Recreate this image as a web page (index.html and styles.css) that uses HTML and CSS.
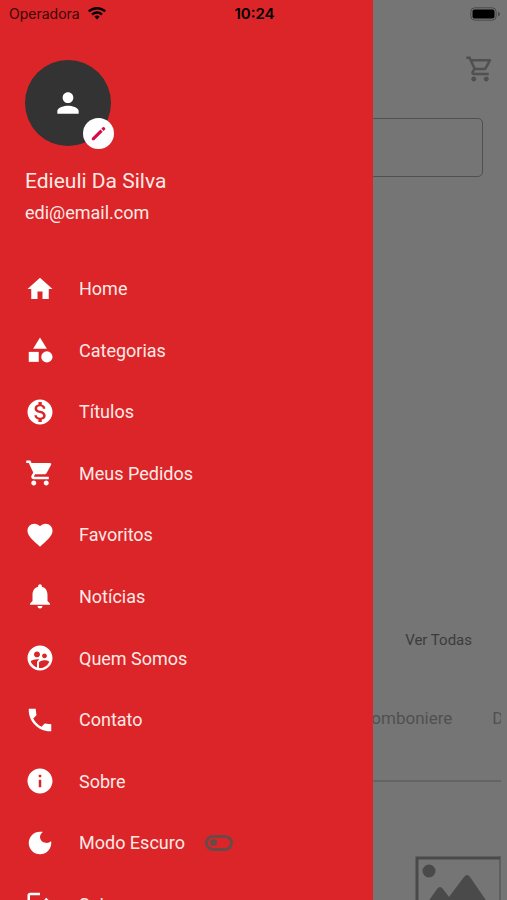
FILE: index.html
```html
<!DOCTYPE html>
<html lang="pt-BR">
<head>
<meta charset="utf-8">
<meta name="viewport" content="width=device-width, initial-scale=1">
<title>Menu</title>
<link rel="stylesheet" href="styles.css">
</head>
<body>
<div class="app">
  <main class="page">
    <div class="toolbar">
      <button class="cart" type="button" aria-label="Carrinho">
        <svg class="icon" viewBox="0 0 24 24"><path d="M15.55 13c.75 0 1.41-.41 1.75-1.03l3.58-6.49A.996.996 0 0 0 20.01 4H5.21l-.94-2H1v2h2l3.6 7.59-1.35 2.44C4.52 15.37 5.48 17 7 17h12v-2H7l1.1-2h7.45zM6.16 6h12.15l-2.76 5H8.53L6.16 6zM7 18c-1.1 0-1.99.9-1.99 2S5.900 22 7 22s2-.9 2-2-.9-2-2-2zm10 0c-1.1 0-1.99.9-1.99 2s.89 2 1.990 2 2-.9 2-2-.9-2-2-2z"/></svg>
      </button>
    </div>
    <input class="search" type="text" aria-label="Buscar">
    <section class="products">
      <a class="see-all" href="#">Ver Todas</a>
      <div class="tabs"><a href="#">Bomboniere</a><a href="#">Doces</a></div>
      <div class="cards">
        <svg class="placeholder" viewBox="0 0 86 74"><path class="frame" d="M2 74V2h83"/><path class="edge" d="M85 0v74"/><circle cx="14" cy="15" r="6.500"/><path d="M8 53 22 33q3-4 6 0l6 8 15-20q3-4 6 0l22 32v21H8z"/></svg>
      </div>
    </section>
  </main>

  <aside class="drawer">
    <div class="profile">
      <div class="avatar">
        <svg class="person" viewBox="0 0 24 24"><path d="M12 12c2.210 0 4-1.790 4-4s-1.790-4-4-4-4 1.790-4 4 1.790 4 4 4zm0 2c-2.670 0-8 1.340-8 4v2h16v-2c0-2.660-5.330-4-8-4z"/></svg>
        <button class="edit" type="button" aria-label="Editar foto">
          <svg viewBox="0 0 24 24"><path d="M4 17.500 14.500 7l2.800 2.800L6.800 20.300Q6.500 20.600 6 20.600H4.500q-1 0-1-1v-1.300q0-.5.5-.8zM15.600 5.900l1.700-1.700q1-1 2 0l.9.9q1 1 0 2l-1.700 1.700z"/></svg>
        </button>
      </div>
      <h1 class="name">Edieuli Da Silva</h1>
      <p class="email">edi@email.com</p>
    </div>
    <nav>
      <ul class="menu">
        <li><a href="#"><svg class="icon" viewBox="0 0 24 24"><path d="M10 20v-6h4v6h5v-8h3L12 3 2 12h3v8z"/></svg>Home</a></li>
        <li><a href="#"><svg class="icon" viewBox="0 0 24 24"><path d="M12 2 6.500 11h11z"/><circle cx="17.500" cy="17.500" r="4.500"/><path d="M3 13.500h8v8H3z"/></svg>Categorias</a></li>
        <li><a href="#"><svg class="icon" viewBox="0 0 24 24"><path d="M12 2C6.480 2 2 6.480 2 12s4.480 10 10 10 10-4.480 10-10S17.520 2 12 2zm1.410 16.090V20h-2.670v-1.930c-1.710-.36-3.160-1.460-3.270-3.400h1.960c.1 1.050.82 1.870 2.650 1.870 1.960 0 2.400-.98 2.400-1.590 0-.83-.44-1.610-2.670-2.140-2.480-.6-4.180-1.620-4.180-3.670 0-1.720 1.390-2.840 3.110-3.210V4h2.670v1.950c1.860.45 2.790 1.860 2.850 3.390H14.300c-.05-1.110-.64-1.870-2.220-1.870-1.500 0-2.400.68-2.400 1.640 0 .84.65 1.390 2.670 1.910s4.180 1.390 4.180 3.910c-.01 1.830-1.380 2.830-3.120 3.160z"/></svg>Títulos</a></li>
        <li><a href="#"><svg class="icon" viewBox="0 0 24 24"><path d="M7 18c-1.100 0-1.990.9-1.990 2S5.900 22 7 22s2-.9 2-2-.9-2-2-2zM1 2v2h2l3.600 7.590-1.350 2.450c-.16.28-.25.61-.25.960 0 1.100.9 2 2 2h12v-2H7.420c-.14 0-.25-.11-.25-.25l.03-.12.900-1.630h7.450c.75 0 1.410-.41 1.750-1.030l3.580-6.490A1 1 0 0 0 20 4H5.210l-.94-2H1zm16 16c-1.100 0-1.990.9-1.990 2s.89 2 1.990 2 2-.9 2-2-.9-2-2-2z"/></svg>Meus Pedidos</a></li>
        <li><a href="#"><svg class="icon" viewBox="0 0 24 24"><path d="m12 21.350-1.450-1.320C5.400 15.360 2 12.280 2 8.500 2 5.420 4.420 3 7.500 3c1.740 0 3.410.81 4.500 2.090C13.090 3.810 14.760 3 16.500 3 19.580 3 22 5.420 22 8.500c0 3.780-3.400 6.860-8.550 11.540L12 21.350z"/></svg>Favoritos</a></li>
        <li><a href="#"><svg class="icon" viewBox="0 0 24 24"><path d="M12 22c1.100 0 2-.9 2-2h-4c0 1.100.89 2 2 2zm6-6v-5c0-3.070-1.640-5.640-4.500-6.320V4c0-.83-.67-1.500-1.500-1.500s-1.500.67-1.500 1.500v.68C7.630 5.360 6 7.920 6 11v5l-2 2v1h16v-1l-2-2z"/></svg>Notícias</a></li>
        <li><a href="#"><svg class="icon" viewBox="0 0 24 24"><path d="M11.990 2c-5.520 0-10 4.480-10 10s4.480 10 10 10 10-4.480 10-10-4.480-10-10-10zm3.610 6.340c1.070 0 1.930.86 1.930 1.930s-.86 1.930-1.930 1.930-1.930-.86-1.930-1.930c-.01-1.070.86-1.930 1.930-1.930zm-6-1.580c1.300 0 2.360 1.060 2.360 2.360s-1.060 2.360-2.360 2.360-2.360-1.060-2.360-2.360c0-1.310 1.050-2.360 2.360-2.360zm0 9.130v3.750c-2.400-.75-4.300-2.600-5.140-4.960 1.050-1.120 3.670-1.690 5.140-1.690.53 0 1.200.08 1.900.22-1.640.87-1.900 2.020-1.900 2.680zM11.990 20c-.27 0-.53-.01-.79-.04v-4.070c0-1.420 2.940-2.130 4.400-2.130 1.070 0 2.920.39 3.840 1.150C18.270 17.880 15.380 20 11.990 20z"/></svg>Quem Somos</a></li>
        <li><a href="#"><svg class="icon" viewBox="0 0 24 24"><path d="m21 15.460-5.270-.61-2.520 2.520a15.050 15.050 0 0 1-6.590-6.590l2.530-2.530L8.540 3H3.030C2.450 13.180 10.820 21.550 21 20.970v-5.510z"/></svg>Contato</a></li>
        <li><a href="#"><svg class="icon" viewBox="0 0 24 24"><path d="M12 2C6.480 2 2 6.480 2 12s4.480 10 10 10 10-4.480 10-10S17.520 2 12 2zm1 15h-2v-6h2v6zm0-8h-2V7h2v2z"/></svg>Sobre</a></li>
        <li><label for="dark-mode"><svg class="icon" viewBox="0 0 24 24"><path d="M12 3a9 9 0 1 0 9 9c0-.46-.04-.92-.1-1.360A5.390 5.390 0 0 1 12 7.500c0-1.810.89-3.420 2.260-4.400C13.820 3.040 13.460 3 12 3z"/></svg>Modo Escuro</label><input class="switch" id="dark-mode" type="checkbox" role="switch"></li>
        <li><a href="#"><svg class="icon" viewBox="0 0 24 24"><path d="m17 7-1.410 1.410L18.170 11H8v2h10.170l-2.580 2.580L17 17l5-5zM4 5h8V3H4c-1.100 0-2 .9-2 2v14c0 1.100.9 2 2 2h8v-2H4V5z"/></svg>Sair</a></li>
      </ul>
    </nav>
  </aside>

  <header class="status">
    <span class="carrier">Operadora
      <svg class="wifi" viewBox="0 0 18 13"><path d="M9 0C5.600 0 2.500 1.300 0 3.600l1.600 1.700A10.800 10.800 0 0 1 9 2.400c2.900 0 5.400 1 7.400 2.900L18 3.600A13.200 13.200 0 0 0 9 0zm0 4.300c-2.200 0-4.200.9-5.800 2.400l1.700 1.700A6 6 0 0 1 9 6.700c1.600 0 3 .6 4.100 1.700l1.700-1.700A8.400 8.400 0 0 0 9 4.300zm0 4.300c-1 0-1.900.4-2.600 1L9 12.500l2.600-2.900c-.7-.6-1.600-1-2.600-1z"/></svg>
    </span>
    <time class="clock">10:24</time>
    <svg class="battery" viewBox="0 0 30 14"><rect class="shell" x=".8" y=".8" width="25.400" height="12.400" rx="4"/><rect x="2.500" y="2.500" width="22" height="9" rx="2"/><path class="cap" d="M28 4.500q2 1 2 2.500t-2 2.500z"/></svg>
  </header>
</div>
</body>
</html>
```
FILE: styles.css
```css
* {
  box-sizing: border-box;
}

body {
  margin: 0;
  font-family: Roboto, "Liberation Sans", sans-serif;
  background: #757575;
}

a {
  color: inherit;
  text-decoration: none;
}

button {
  border: 0;
  padding: 0;
  background: none;
}

svg {
  display: block;
  flex: none;
  fill: currentColor;
}

.icon {
  width: 30px;
  height: 30px;
}

.app {
  position: relative;
  height: 100vh;
  overflow: hidden;
}

/* Dimmed page behind the drawer */
.page {
  display: flex;
  flex-direction: column;
  height: 100%;
  padding-top: 54px;
  color: #4a4a4a;
}

.toolbar {
  display: flex;
  justify-content: flex-end;
  padding: 0 12px;
}

.cart {
  color: #505050;
}

.search {
  flex: none;
  height: 59px;
  margin: 34px 24px 0;
  border: 1px solid #505050;
  border-radius: 5px;
  background: none;
}

.products {
  display: flex;
  flex-direction: column;
  flex: 1;
  margin-top: 453px;
  margin-right: 6px;
}

.see-all {
  align-self: flex-end;
  margin-right: 29px;
  font-size: 15px;
  line-height: 20px;
  color: #3c3c3c;
}

.tabs {
  display: flex;
  gap: 40px;
  padding: 56px 0 50px 72%;
  overflow: hidden;
  border-bottom: 2px solid #646464;
  font-size: 17px;
  line-height: 24px;
  color: #505050;
}

.cards {
  display: flex;
  justify-content: flex-end;
  padding-top: 74px;
}

.placeholder {
  width: 86px;
  height: 74px;
}

.frame,
.edge {
  fill: none;
  stroke: currentColor;
  stroke-width: 3;
}

.edge {
  stroke-width: 1;
}

/* Navigation drawer */
.drawer {
  position: absolute;
  top: 0;
  bottom: 0;
  left: 0;
  width: 73.5%;
  padding-top: 60px;
  overflow: hidden;
  background: #db2528;
  color: #fff;
}

.profile {
  padding-left: 25px;
}

.avatar {
  position: relative;
  display: grid;
  place-items: center;
  width: 86px;
  height: 86px;
  border-radius: 50%;
  background: #333;
}

.person {
  width: 32px;
  height: 32px;
}

.edit {
  position: absolute;
  right: -3px;
  bottom: -3px;
  display: grid;
  place-items: center;
  width: 31px;
  height: 31px;
  border-radius: 50%;
  background: #fff;
  color: #d50a48;
}

.edit svg {
  width: 19px;
  height: 19px;
}

.name,
.email {
  margin: 0;
  font-weight: 400;
  color: #ffe9e6;
}

.name {
  margin-top: 20px;
  font-size: 21px;
  line-height: 30px;
}

.email {
  margin-top: 4px;
  font-size: 18px;
  line-height: 26px;
}

.menu {
  display: grid;
  grid-template-rows: repeat(11, 1fr);
  min-height: 677px;
  margin: 32px 0 0;
  padding: 0 25px;
  list-style: none;
  font-size: 18px;
}

.menu li {
  display: flex;
  align-items: center;
  gap: 20px;
  color: #ffe9e6;
}

.menu a,
.menu label {
  display: flex;
  align-items: center;
  gap: 24px;
}

.menu .icon {
  color: #fff;
}

.switch {
  appearance: none;
  display: flex;
  align-items: center;
  width: 28px;
  height: 16px;
  margin: 0;
  padding: 0 2px;
  border: 3px solid #6a4a49;
  border-radius: 8px;
}

.switch::before {
  content: "";
  width: 7px;
  height: 7px;
  border-radius: 50%;
  background: #6a4a49;
}

/* System status bar */
.status {
  position: absolute;
  top: 0;
  left: 0;
  right: 0;
  display: grid;
  grid-template-columns: 1fr auto 1fr;
  align-items: center;
  height: 27px;
  padding: 0 7px 0 9px;
  font-family: Inter, "Liberation Sans", sans-serif;
  font-size: 14px;
  color: #000;
}

.carrier {
  display: flex;
  align-items: center;
  gap: 8px;
  color: #3a0708;
}

.wifi {
  width: 18px;
  height: 13px;
  color: #000;
}

.clock {
  font-size: 15px;
  font-weight: 600;
}

.battery {
  justify-self: end;
  width: 30px;
  height: 14px;
}

.shell {
  fill: none;
  stroke: #4a4a4a;
}

.cap {
  fill: #4a4a4a;
}
```
